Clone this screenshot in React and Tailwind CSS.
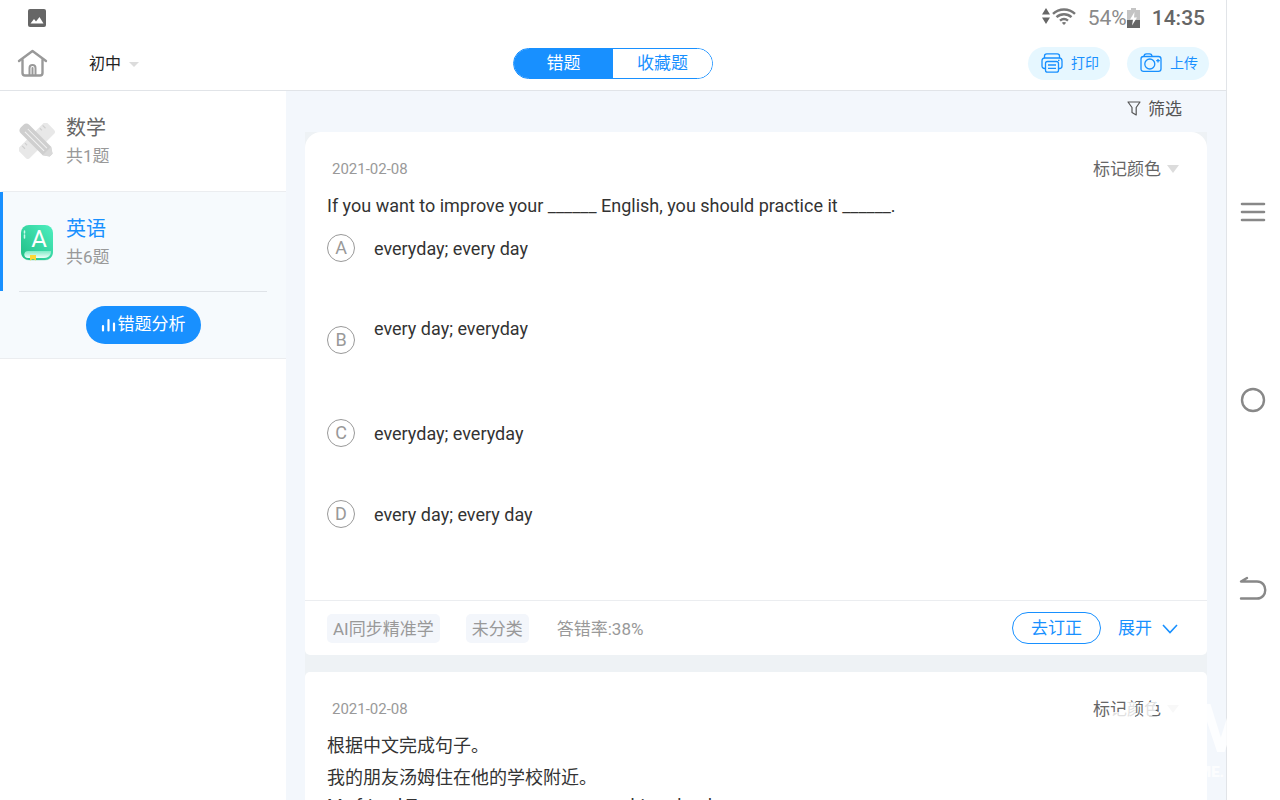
import React, { useState } from 'react';

const subjects = [
    { id: 'math', name: '数学', total: '共1题' },
    { id: 'english', name: '英语', total: '共6题' },
];

const options = [
    { key: 'A', text: 'everyday; every day', row: 'h-20', circle: '' },
    { key: 'B', text: 'every day; everyday', row: 'h-[105px]', circle: 'mt-3' },
    { key: 'C', text: 'everyday; everyday', row: 'h-[81px]', circle: '' },
    { key: 'D', text: 'every day; every day', row: 'h-[100px]', circle: '' },
];

const Triangle = ({ className }) => (
    <svg viewBox="0 0 12 8" preserveAspectRatio="none" className={className} fill="currentColor" aria-hidden="true">
        <path d="M0 0h12L6 8z" />
    </svg>
);

const StatusBar = () => (
    <div className="flex h-9 items-center justify-between pl-7 pr-[21px]">
        <svg width="18" height="18" viewBox="0 0 18 18" aria-hidden="true">
            <rect width="18" height="18" rx="2" fill="#666" />
            <path d="M2.500 14.500l3.500-4.500 2 2.500 3.500-4.500 4 6.500z" fill="#fff" />
        </svg>
        <div className="flex items-center pt-[2px] text-[#757575]">
            <svg width="8" height="16" viewBox="0 0 8 16" fill="#666" className="mb-[6px]" aria-hidden="true">
                <path d="M4 0l4 6.500H0zM4 16l4-6.500H0z" />
            </svg>
            <svg width="24" height="17" viewBox="0 0 24 17" fill="none" stroke="#777" strokeWidth="2.400" className="ml-[2px] mb-[6px]" aria-hidden="true">
                <path d="M1 5.800C7 0 17 0 23 5.800M4.500 9.200c4.300-4 10.700-4 15 0M8 12.600c2.400-2 5.600-2 8 0" />
                <path d="M12 17l-2.200-2.200c1.200-1 3.200-1 4.400 0z" fill="#777" stroke="none" />
            </svg>
            <span className="ml-3 text-[21px] text-[#8a8a8a]">54%</span>
            <svg width="13" height="20" viewBox="0 0 13 20" className="mb-[2px]" aria-hidden="true">
                <path d="M4 0h5v2h4v10H0V2h4z" fill="#c4c4c4" />
                <path d="M0 12h13v8H0z" fill="#666" />
                <path d="M7.500 4L3 11.500h3L5 17.500l5-8H7z" fill="#fff" />
            </svg>
            <span className="ml-3 text-[21px] font-medium text-[#666]">14:35</span>
        </div>
    </div>
);

const Header = ({ tab, setTab }) => (
    <header className="flex h-[55px] items-center border-b border-[#e1e4e8] pl-[17px] pr-[17px]">
        <div className="flex flex-1 items-center">
            <button type="button" aria-label="首页">
                <svg width="31" height="28" viewBox="0 0 31 28" fill="none" stroke="#999" strokeWidth="2.400" strokeLinecap="round" strokeLinejoin="round" aria-hidden="true">
                    <path d="M2 12L15.500 2 29 12" />
                    <path d="M5.500 11v13c0 1.500 1 2.500 2.500 2.500h15c1.500 0 2.500-1 2.500-2.500V11" />
                    <path d="M12.500 26v-7c0-4 6-4 6 0v7M15.500 19v7" strokeWidth="2" />
                </svg>
            </button>
            <label className="ml-[41px] flex items-center">
                <select aria-label="学段" className="appearance-none pt-[2px] text-base text-[#222]">
                    <option>初中</option>
                </select>
                <Triangle className="ml-[7px] mt-[2px] h-[5px] w-[10px] text-[#dcdcdc]" />
            </label>
        </div>

        <div role="tablist" className="flex h-[31px] w-50 overflow-hidden rounded-full border border-[#1890ff] text-[17px]">
            {['错题', '收藏题'].map((name) => (
                <button
                    key={name}
                    type="button"
                    role="tab"
                    aria-selected={tab === name}
                    onClick={() => setTab(name)}
                    className={`flex flex-1 items-center justify-center pt-[2px] ${tab === name ? 'bg-[#1890ff] text-white' : 'bg-white text-[#1890ff]'}`}
                >
                    {name}
                </button>
            ))}
        </div>

        <div className="flex flex-1 justify-end gap-[17px] text-sm text-[#1890ff]">
            <button type="button" className="flex h-[33px] items-center gap-2 rounded-full bg-[#e6f7ff] pl-[13px] pr-[11px]">
                <svg width="22" height="20" viewBox="0 0 22 20" fill="none" stroke="currentColor" strokeWidth="1.300" strokeLinejoin="round" aria-hidden="true">
                    <path d="M3.500 5V3c0-1.300.9-2.200 2.200-2.200h10.600c1.300 0 2.200.9 2.200 2.200v2" />
                    <path d="M4.500 15.500H3.500C2 15.500 1 14.500 1 13V8c0-1.800 1-3 2.800-3h14.400C20 5 21 6.200 21 8v5c0 1.500-1 2.500-2.500 2.500h-1" />
                    <rect x="4.500" y="8.500" width="13" height="10.700" rx="2" />
                    <path d="M7 12h8M7 15.300h8M17 7.300h1.500" />
                </svg>
                打印
            </button>
            <button type="button" className="flex h-[33px] items-center gap-2 rounded-full bg-[#e6f7ff] pl-[13px] pr-[11px]">
                <svg width="22" height="20" viewBox="0 0 22 20" fill="none" stroke="currentColor" strokeWidth="1.300" strokeLinejoin="round" aria-hidden="true">
                    <path d="M4 3.500C4 1.800 5 .8 6.500.8h3c1.500 0 2.500 1 2.500 2.700" />
                    <path d="M3.500 3.500h15c1.500 0 2.500.5 2.500 2.500v10c0 1.500-1 2.300-2.500 2.300h-15C2 18.300 1 17.500 1 16V6c0-1.500 1-2.500 2.500-2.500z" />
                    <circle cx="9.800" cy="11" r="5" />
                    <path d="M18 6v3.500M16.200 7.700h3.600" />
                </svg>
                上传
            </button>
        </div>
    </header>
);

const MathIcon = () => (
    <svg width="36" height="36" viewBox="0 0 36 36" aria-hidden="true">
        <g transform="rotate(45 18 18)">
            <rect x="10" y="-2" width="15" height="40" rx="3" fill="#e8e8e8" />
            <path d="M11 3h4M11 7h3M11 28h3M11 32h4" stroke="#d0d0d0" strokeWidth="1.200" />
        </g>
        <g transform="rotate(-45 18 18)">
            <path d="M12 1c0-2.500 1.500-4 4-4h4c2.500 0 4 1.500 4 4v31l-4 6h-4l-4-6z" fill="#cfcfcf" />
            <path d="M16 3v27M20 3v27" stroke="#f2f2f2" strokeWidth="1" />
            <path d="M12 32h12l-4 6h-4z" fill="#d9d9d9" />
        </g>
    </svg>
);

const EnglishIcon = () => (
    <svg width="36" height="38" viewBox="0 0 36 38" aria-hidden="true">
        <defs>
            <linearGradient id="cover" x1="0" y1="1" x2="1" y2="0">
                <stop offset="0" stopColor="#1fbd85" />
                <stop offset="1" stopColor="#4fefc0" />
            </linearGradient>
            <linearGradient id="pages" x1="0" y1="0" x2="0" y2="1">
                <stop offset="0" stopColor="#7eeac6" />
                <stop offset="1" stopColor="#f0fff9" />
            </linearGradient>
        </defs>
        <rect x="2" y="3" width="32" height="35" rx="9" fill="#d5efe9" />
        <rect x="2" y="2" width="32" height="35" rx="8" fill="url(#cover)" />
        <path d="M32 28H9c-5 0-5 7 0 7h16c4 0 7-2 7-7z" fill="url(#pages)" />
        <path d="M11 32h6v5.500l-3-1.500-3 1.500z" fill="#fdd835" />
        <path d="M5.500 8v2M5.500 12v3" stroke="#c8fbe9" strokeWidth="1.500" strokeLinecap="round" />
        <text x="20" y="24" textAnchor="middle" fontSize="24" fill="#fff">A</text>
    </svg>
);

const Sidebar = ({ selected, setSelected }) => (
    <aside className="w-[286px] shrink-0 bg-white">
        {subjects.map((subject) => {
            const active = subject.id === selected;
            return (
                <button
                    key={subject.id}
                    type="button"
                    onClick={() => setSelected(subject.id)}
                    className={`flex w-full items-center border-l-3 pl-4 text-left ${active ? 'h-[100px] border-l-[#1890ff] bg-[#f6fafd]' : 'h-[101px] border-b border-l-transparent border-b-[#ebedf0]'}`}
                >
                    {subject.id === 'math' ? <MathIcon /> : <EnglishIcon />}
                    <span className="ml-[11px] pt-[2px]">
                        <span className={`block text-xl leading-7 ${active ? 'text-[#1890ff]' : 'text-[#666]'}`}>{subject.name}</span>
                        <span className="block text-[17px] leading-7 text-[#999]">{subject.total}</span>
                    </span>
                </button>
            );
        })}
        <div className="border-b border-[#ebedf0] bg-[#f6fafd]">
            <hr className="-mt-px ml-[19px] mr-[19px] border-[#dfe3e8]" />
            <div className="flex h-[66px] items-center justify-center">
                <button type="button" className="flex h-[38px] items-center gap-[2px] rounded-full bg-[#1890ff] px-[15px] text-[17px] text-white">
                    <svg width="15" height="14" viewBox="0 0 15 14" stroke="#fff" strokeWidth="2.200" strokeLinecap="round" aria-hidden="true">
                        <path d="M2 8v4.500M7.500 2v10.500M13 5.500v7" />
                    </svg>
                    错题分析
                </button>
            </div>
        </div>
    </aside>
);

const CardHead = () => (
    <div className="flex h-[74px] items-center justify-between pl-[27px] pr-[28px]">
        <time className="text-[15px] text-[#999]">2021-02-08</time>
        <label className="flex items-center">
            <select aria-label="标记颜色" className="appearance-none pt-[2px] text-[17px] text-[#666]">
                <option>标记颜色</option>
            </select>
            <Triangle className="ml-[6px] h-2 w-3 text-[#dcdcdc]" />
        </label>
    </div>
);

const ChoiceCard = () => {
    const [answer, setAnswer] = useState('');

    return (
        <article className="rounded-t-2xl rounded-b-[5px] bg-white">
            <CardHead />
            <div className="-mt-[14px] px-[22px] text-lg text-[#333]">
                <p className="mb-[15px] leading-[27px]">
                    If you want to improve your ______ English, you should practice it ______.
                </p>
                {options.map((option) => (
                    <label key={option.key} className={`flex items-start ${option.row}`}>
                        <input
                            type="radio"
                            name="answer"
                            className="sr-only"
                            checked={answer === option.key}
                            onChange={() => setAnswer(option.key)}
                        />
                        <span className={`flex size-7 items-center justify-center rounded-full border border-[#999] text-[#999] ${option.circle}`}>
                            {option.key}
                        </span>
                        <span className="ml-[19px] leading-[30px]">{option.text}</span>
                    </label>
                ))}
            </div>
            <footer className="flex h-[55px] items-center border-t border-[#ebedf0] pl-[22px] pr-[29px] text-[17px] text-[#999]">
                <span className="h-[29px] rounded-[5px] bg-[#f3f6fb] px-[6px] leading-[31px]">AI同步精准学</span>
                <span className="ml-[26px] h-[29px] rounded-[5px] bg-[#f3f6fb] px-[6px] leading-[31px]">未分类</span>
                <span className="ml-7 h-[29px] leading-[31px]">答错率:38%</span>
                <button type="button" className="ml-auto h-8 rounded-full border border-[#1890ff] px-[18px] pt-[2px] text-[#1890ff]">
                    去订正
                </button>
                <button type="button" className="ml-[17px] flex items-center gap-[10px] pt-[2px] text-[#1890ff]">
                    展开
                    <svg width="16" height="10" viewBox="0 0 16 10" fill="none" stroke="currentColor" strokeWidth="1.600" aria-hidden="true">
                        <path d="M1 1l7 7.500L15 1" />
                    </svg>
                </button>
            </footer>
        </article>
    );
};

const SentenceCard = () => (
    <article className="rounded-[5px] bg-white">
        <CardHead />
        <div className="-mt-4 px-[22px] text-lg leading-8 text-[#333]">
            <p>根据中文完成句子。</p>
            <p>我的朋友汤姆住在他的学校附近。</p>
            <p className="leading-6">My friend Tom _______ _______ _______ his school.</p>
        </div>
    </article>
);

const NavBar = () => (
    <nav className="flex w-[54px] shrink-0 flex-col items-center justify-between border-l border-[#e1e4e8] pt-[200px] pr-px pb-[198px]">
        <button type="button" aria-label="菜单">
            <svg width="26" height="24" viewBox="0 0 26 24" stroke="#888" strokeWidth="2.600" strokeLinecap="round" aria-hidden="true">
                <path d="M2 4h22M2 12h22M2 20h22" />
            </svg>
        </button>
        <button type="button" aria-label="主屏幕">
            <svg width="26" height="26" viewBox="0 0 26 26" fill="none" stroke="#888" strokeWidth="2.400" aria-hidden="true">
                <circle cx="13" cy="13" r="11" />
            </svg>
        </button>
        <button type="button" aria-label="返回">
            <svg width="28" height="26" viewBox="0 0 28 26" fill="none" stroke="#888" strokeWidth="2.400" strokeLinecap="round" strokeLinejoin="round" aria-hidden="true">
                <path d="M8 2L2 5.500h16c11 0 11 17 0 17H2" />
            </svg>
        </button>
    </nav>
);

const App = () => {
    const [tab, setTab] = useState('错题');
    const [selected, setSelected] = useState('english');

    return (
        <div className="relative flex h-screen overflow-hidden bg-white font-[Roboto,'Noto_Sans_CJK_SC',sans-serif]">
            <div className="flex min-w-0 flex-1 flex-col">
                <StatusBar />
                <Header tab={tab} setTab={setTab} />
                <div className="flex min-h-0 flex-1">
                    <Sidebar selected={selected} setSelected={setSelected} />
                    <main className="flex min-w-0 flex-1 flex-col bg-[#f3f7fc] pl-[19px] pr-[19px]">
                        <div className="flex h-[41px] shrink-0 items-center justify-end pr-[25px] pb-1">
                            <button type="button" className="flex items-center gap-[7px] text-[17px] text-[#555]">
                                <svg width="14" height="15" viewBox="0 0 14 15" fill="none" stroke="currentColor" strokeWidth="1.200" strokeLinejoin="round" className="mb-[2px]" aria-hidden="true">
                                    <path d="M1 1h12l-3.800 5.500V14L5 11.500v-5z" />
                                </svg>
                                筛选
                            </button>
                        </div>
                        <section className="flex min-h-0 flex-1 flex-col gap-[17px] bg-[#eef2f5]">
                            <ChoiceCard />
                            <SentenceCard />
                        </section>
                    </main>
                </div>
            </div>
            <NavBar />

            {/* Watermark over the bottom right corner */}
            <div className="pointer-events-none absolute right-0 bottom-0 h-[130px] w-[180px]" aria-hidden="true">
                <svg width="180" height="130" viewBox="0 -30 180 130" fill="#fff" fillOpacity="0.8">
                    <path d="M12 12h16V2h7v20H12zM44 2h12v8l-4 6h-8zM62 2h20v12H62z" />
                    <text x="92" y="52" fontSize="66" fontWeight="900">M</text>
                    <text x="98" y="77" fontSize="15" fontWeight="900">ME.</text>
                </svg>
            </div>
        </div>
    );
};

export default App;
